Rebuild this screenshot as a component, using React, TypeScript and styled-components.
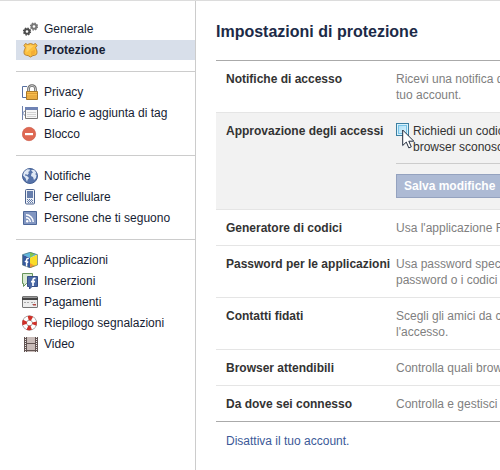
import React from "react";
import styled, { createGlobalStyle } from "styled-components";

const Global = createGlobalStyle`
  *, *::before, *::after { box-sizing: border-box; }
  body {
    margin: 0;
    background: #fff;
    color: #333;
    font: 12px/16px "Liberation Sans", Arial, sans-serif;
    overflow: hidden;
  }
`;

const Page = styled.div`
  display: grid;
  grid-template-columns: 196px minmax(0, 1fr);
  min-height: 100vh;
  border-top: 1px solid #dcdcdc;
`;

const Sidebar = styled.nav`
  padding: 18px 0 0 16px;
  border-right: 1px solid #ccc;
`;

const Group = styled.ul`
  display: flex;
  flex-direction: column;
  gap: 1px;
  margin: 0;
  padding: 0 0 11px;
  list-style: none;

  & + & {
    padding-top: 10px;
    border-top: 1px solid #ccc;
  }
`;

const NavLink = styled.a<{ $active?: boolean }>`
  display: flex;
  align-items: center;
  gap: 6px;
  height: 20px;
  padding-left: 6px;
  color: #161d33;
  text-decoration: none;
  white-space: nowrap;
  background: ${(p) => (p.$active ? "#d8dfea" : "transparent")};
  font-weight: ${(p) => (p.$active ? "bold" : "normal")};
`;

const Icon = styled.svg`
  flex: none;
  width: 16px;
  height: 16px;
`;

const Main = styled.main`
  padding-left: 20px;
  overflow: hidden;
`;

const Title = styled.h1`
  margin: 0;
  padding: 21px 0 18px;
  color: #1c2a47;
  font-size: 16px;
  line-height: 20px;
  white-space: nowrap;
`;

const Settings = styled.ul`
  margin: 0;
  padding: 0;
  list-style: none;
  border-top: 1px solid #aaa;
`;

const Row = styled.li<{ $open?: boolean }>`
  display: grid;
  grid-template-columns: 170px minmax(0, 1fr);
  padding: 10px 0 9px 10px;
  border-bottom: 1px solid #e5e5e5;
  background: ${(p) => (p.$open ? "#f2f2f2" : "transparent")};
  white-space: nowrap;

  &:last-child {
    border-bottom-color: #aaa;
  }
`;

const RowTitle = styled.h2`
  margin: 0;
  font-size: 12px;
  line-height: 16px;
`;

const Description = styled.p`
  margin: 0;
  color: #808080;
`;

const CheckLine = styled.div`
  position: relative;
  display: flex;
  gap: 4px;
  padding-bottom: 8px;
  border-bottom: 1px solid #ccc;
`;

const Checkbox = styled.input`
  appearance: none;
  flex: none;
  width: 13px;
  height: 13px;
  margin: 0;
  border: 1px solid #3c7fa1;
  background: linear-gradient(135deg, #a5dcf5, #e3f6fe);
  box-shadow: inset 0 0 0 1px #d9f2fc, inset 0 0 0 2px #79c4e8;
`;

const Pointer = styled.svg`
  position: absolute;
  left: 6px;
  top: 6px;
  width: 13px;
  height: 20px;
  pointer-events: none;
`;

const SaveButton = styled.button`
  height: 24px;
  margin: 10px 0 2px;
  padding: 0 7px;
  border: 1px solid #94a2bf;
  background: #adbad4;
  color: #fff;
  font: bold 12px/16px "Liberation Sans", Arial, sans-serif;
`;

const Deactivate = styled.a`
  display: inline-block;
  margin: 11px 10px;
  color: #3b5998;
  text-decoration: none;
`;

const Gear = ({ x, y, fill }: { x: number; y: number; fill: string }) => (
  <g transform={`translate(${x} ${y})`}>
    <circle r="2.3" fill="none" stroke={fill} strokeWidth="1.9" />
    <circle r="3.5" fill="none" stroke={fill} strokeWidth="1.3" strokeDasharray="1.5 1.25" />
  </g>
);

const icons = {
  gears: (
    <>
      <Gear x={5} y={10.5} fill="#4c4c4c" />
      <Gear x={12} y={5.5} fill="#777" />
    </>
  ),
  badge: (
    <>
      <path d="M3.5 1.500 5.500 2.500 8.500 1.500 11.500 2.500 13.500 1.500 15 3.500 13.700 5.500C14 7 15 8 15 10.500c0 2.500-2 3-4 3L8.500 15 6 13.500c-2 0-4-.5-4-3C2 8 3 7 3.300 5.500L2 3.500Z" fill="#fcc03e" stroke="#b98435" />
      <path d="M4.500 3.500h7.500L4.500 10.500Z" fill="#ffd164" />
      <path d="M13 7.500 9 9.500v4l4-2Z" fill="#f4ad35" />
    </>
  ),
  lock: (
    <>
      <path d="M5 2.500H.500v11H5" fill="#fff" stroke="#5870a0" />
      <path d="M6.500 8V5a3.500 3.500 0 0 1 7 0v3" fill="none" stroke="#666" strokeWidth="2.600" />
      <path d="M6.500 8V5a3.500 3.500 0 0 1 7 0v3" fill="none" stroke="#ccc" />
      <path d="M4.500 7.500h11v8h-11Z" fill="#f8bd4e" stroke="#a97828" />
      <path d="M5 9.500h10M5 12h10M5 14h10" stroke="#dc9c35" />
    </>
  ),
  timeline: (
    <>
      <path d="M.500 1v14M3.500 5.500.500 8l3 3" fill="none" stroke="#7083ad" />
      <path d="M3.500 2.500h12v11h-12Z" fill="#f7f7f7" stroke="#777" />
      <path d="M3 2h13v3H3Z" fill="#6f83b4" />
      <path d="M5 7.500h9M5 9.500h9M5 11.500h9" stroke="#d2d2d2" />
    </>
  ),
  block: (
    <>
      <circle cx="7" cy="8" r="6.700" fill="#df6852" stroke="#c95543" strokeWidth=".6" />
      <path d="M3 7h8v2.200H3Z" fill="#fff" />
    </>
  ),
  globe: (
    <>
      <circle cx="8" cy="8" r="7.500" fill="#5673a9" stroke="#435f94" />
      <path d="m2 4 3-2.700 3 .2-.5 1.800L6 4l1 1-1.500 2L3.500 6 3 7.500l2 .5 2 2-1.500 2L5 14 3.500 10 1 7.500ZM9 2l3-.2L14.500 5 13 6l1.500 1-.5 3-2 2-1-3-2-1 .5-2.500L11 4.500Z" fill="#dfe8f4" />
    </>
  ),
  phone: (
    <>
      <rect x="3.500" y=".5" width="9" height="14.500" rx="1" fill="#eef1f6" stroke="#4d638e" />
      <path d="M5 2h6v7H5Z" fill="#667eac" />
      <path d="M5 10.500h1m1 0h1m1 0h1M6 11.500h1m1 0h1m1 0h1M5 12.500h1m1 0h1m1 0h1M6 13.500h1m1 0h1m1 0h1" stroke="#667eac" />
    </>
  ),
  feed: (
    <>
      <path d="M1.500 1.500h13v13h-13Z" fill="#8296c1" stroke="#4d6799" />
      <circle cx="5.200" cy="11.200" r="1.200" fill="#fff" />
      <path d="M4 7.700a4.300 4.300 0 0 1 4.300 4.300M4 4.800a7.200 7.200 0 0 1 7.200 7.200" fill="none" stroke="#fff" strokeWidth="1.500" />
    </>
  ),
  apps: (
    <>
      <path d="m8 0 7.500 2.500L8 6 .5 2.500Z" fill="#60b7dd" />
      <path d="m8 0 5 1.700L8 6Z" fill="#83c84f" />
      <path d="M.500 2.500 8 6v10L.500 13Z" fill="#35589c" />
      <path d="M15.500 2.500 8 6v10l7.500-3Z" fill="#fadd27" />
      <path d="m8 11 5 3-5 2Z" fill="#f29a32" />
      <path d="M8 .4 15.500 2.700V13L8 15.700.5 13V2.700Z" fill="none" stroke="#4b6d72" strokeWidth=".6" />
      <path d="M6.800 6.600C4.900 6 4.600 7 4.600 8.500v6M2.800 9.300l3.500 1" fill="none" stroke="#fff" strokeWidth="1.500" />
    </>
  ),
  ads: (
    <>
      <path d="M.500.500h10v10h-6l-3 3v-3h-1Z" fill="#d9ead2" stroke="#67945b" />
      <path d="M5.500 3.500h10v10H10L7.500 16v-2.500h-2Z" fill="#4968a5" stroke="#354f87" />
      <path d="M13.500 5.500c-2.300-.5-2.500.5-2.500 2v5.500M9 8.700h4" fill="none" stroke="#fff" strokeWidth="1.700" />
    </>
  ),
  card: (
    <>
      <rect x=".5" y="2.500" width="15" height="11" rx=".5" fill="#eee" stroke="#777" />
      <path d="M0 3.500h16v2.500H0Z" fill="#444" />
      <path d="M2 8.500h6m1 0h4M10 10.500h4" stroke="#aaa" strokeDasharray="2 1" />
      <path d="M11 10h3v1.500h-3Z" fill="#b34a45" />
    </>
  ),
  buoy: (
    <>
      <circle cx="7.500" cy="8" r="5" fill="none" stroke="#777" strokeWidth="5" />
      <circle cx="7.500" cy="8" r="5" fill="none" stroke="#fff" strokeWidth="3.800" />
      <circle cx="7.500" cy="8" r="5" fill="none" stroke="#cf3028" strokeWidth="4.600" strokeDasharray="3.927 3.927" strokeDashoffset="1.960" />
    </>
  ),
  film: (
    <>
      <path d="M2 1h14v15H2Z" fill="#625452" />
      <path d="M5 1h8v6H5ZM5 8h8v6H5ZM5 15h8v1H5Z" fill="#c8bbb8" />
      <path d="M3.500 1v15M14.500 1v15" stroke="#eee" strokeDasharray="1 1" />
    </>
  ),
};

type IconName = keyof typeof icons;

const groups: { label: string; icon: IconName; active?: boolean }[][] = [
  [
    { label: "Generale", icon: "gears" },
    { label: "Protezione", icon: "badge", active: true },
  ],
  [
    { label: "Privacy", icon: "lock" },
    { label: "Diario e aggiunta di tag", icon: "timeline" },
    { label: "Blocco", icon: "block" },
  ],
  [
    { label: "Notifiche", icon: "globe" },
    { label: "Per cellulare", icon: "phone" },
    { label: "Persone che ti seguono", icon: "feed" },
  ],
  [
    { label: "Applicazioni", icon: "apps" },
    { label: "Inserzioni", icon: "ads" },
    { label: "Pagamenti", icon: "card" },
    { label: "Riepilogo segnalazioni", icon: "buoy" },
    { label: "Video", icon: "film" },
  ],
];

const Setting = ({ title, lines }: { title: string; lines: string[] }) => (
  <Row>
    <RowTitle>{title}</RowTitle>
    <Description>
      {lines.map((line, i) => (
        <React.Fragment key={line}>
          {i > 0 && <br />}
          {line}
        </React.Fragment>
      ))}
    </Description>
  </Row>
);

export default function App() {
  return (
    <>
      <Global />
      <Page>
        <Sidebar>
          {groups.map((items) => (
            <Group key={items[0].label}>
              {items.map(({ label, icon, active }) => (
                <li key={label}>
                  <NavLink href="#" $active={active} aria-current={active ? "page" : undefined}>
                    <Icon viewBox="0 0 16 16" aria-hidden="true">{icons[icon]}</Icon>
                    {label}
                  </NavLink>
                </li>
              ))}
            </Group>
          ))}
        </Sidebar>
        <Main>
          <Title>Impostazioni di protezione</Title>
          <Settings>
            <Setting title="Notifiche di accesso" lines={["Ricevi una notifica quando", "tuo account."]} />
            <Row $open>
              <RowTitle>Approvazione degli accessi</RowTitle>
              <div>
                <CheckLine>
                  <Checkbox type="checkbox" id="login-approval" />
                  <label htmlFor="login-approval">
                    Richiedi un codice
                    <br />
                    browser sconosciuto
                  </label>
                  <Pointer viewBox="0 0 13 20" aria-hidden="true">
                    <path d="M.700 1v15.500l3.600-3.400 2.500 5.800 2.500-1.100-2.500-5.600h5Z" fill="#fff" stroke="#222c3c" />
                  </Pointer>
                </CheckLine>
                <SaveButton type="button">Salva modifiche</SaveButton>
              </div>
            </Row>
            <Setting title="Generatore di codici" lines={["Usa l'applicazione Facebook"]} />
            <Setting title="Password per le applicazioni" lines={["Usa password speciali", "password o i codici"]} />
            <Setting title="Contatti fidati" lines={["Scegli gli amici da chiamare", "l'accesso."]} />
            <Setting title="Browser attendibili" lines={["Controlla quali browser"]} />
            <Setting title="Da dove sei connesso" lines={["Controlla e gestisci"]} />
          </Settings>
          <Deactivate href="#">Disattiva il tuo account.</Deactivate>
        </Main>
      </Page>
    </>
  );
}
